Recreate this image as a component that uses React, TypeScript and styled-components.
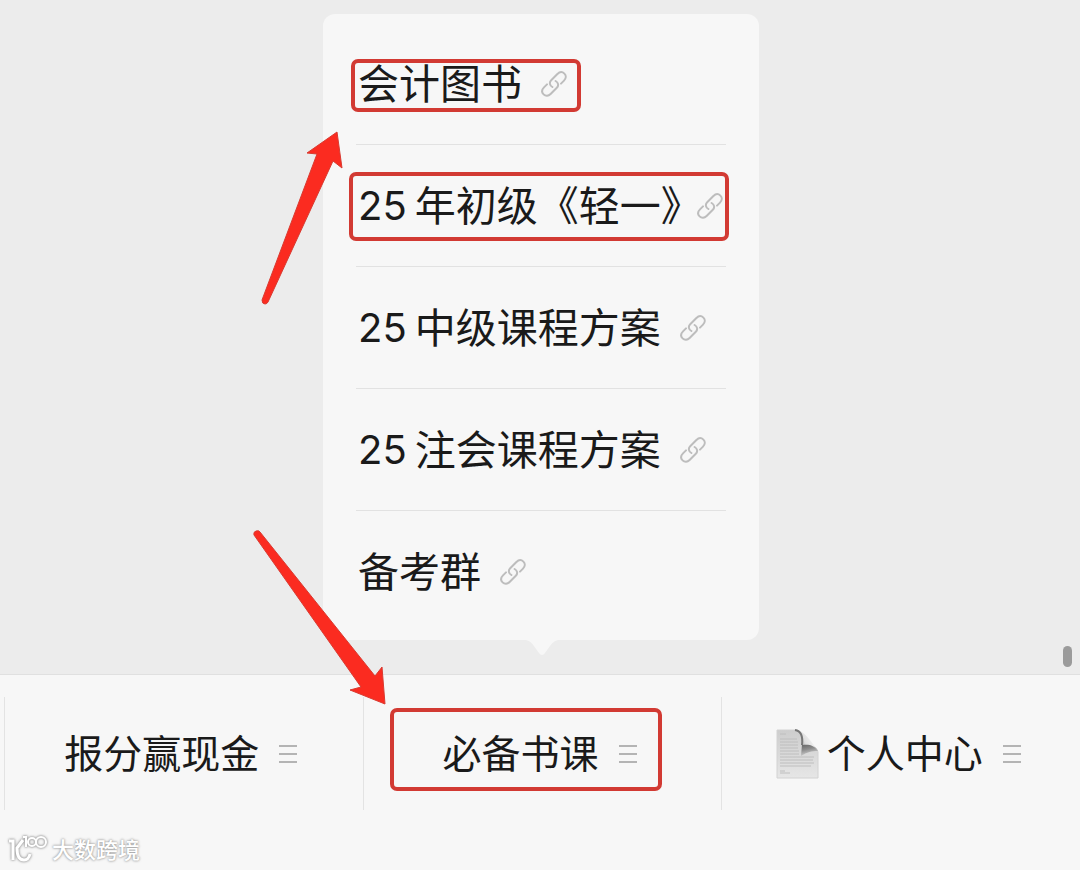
import React from "react";
import styled, { createGlobalStyle } from "styled-components";

const GlobalStyle = createGlobalStyle`
  *, *::before, *::after { box-sizing: border-box; }
  body {
    margin: 0;
    background: #f7f7f7;
    color: #1a1a1a;
    font-family: Inter, "Noto Sans CJK SC", sans-serif;
  }
`;

const Page = styled.div`
  display: flex;
  flex-direction: column;
  min-height: 100vh;
`;

const Stage = styled.main`
  position: relative;
  flex: 1;
  display: flex;
  justify-content: center;
  align-items: flex-start;
  padding: 14px 0 34px 2px;
  background: #ececec;
`;

const Popup = styled.section`
  position: relative;
  z-index: 1;
  width: 436px;
  padding: 9px 33px 7px;
  border-radius: 12px;
  background: #f7f7f7;
`;

const PopupTail = styled.svg`
  position: absolute;
  top: 100%;
  left: 50%;
  width: 32px;
  height: 16px;
  margin-left: -15px;
  fill: #f7f7f7;
`;

const MenuList = styled.ul`
  margin: 0;
  padding: 0;
  list-style: none;
`;

const MenuRow = styled.li`
  display: flex;
  align-items: center;
  height: 122px;
  border-bottom: 1px solid #e2e2e2;
  &:last-child { border-bottom-color: transparent; }
`;

const MenuLink = styled.a`
  position: relative;
  display: flex;
  align-items: center;
  gap: 18px;
  padding-left: 2px;
  color: inherit;
  font-size: 41px;
  line-height: 60px;
  white-space: nowrap;
  text-decoration: none;
`;

const LinkLabel = styled.span<{ $tight?: boolean }>`
  display: flex;
  gap: 8px;
  margin-right: ${(p) => (p.$tight ? "-24px" : "0")};
`;

const Digits = styled.span`
  font-size: 40px;
`;

const Highlight = styled.span<{ $inset: string }>`
  position: absolute;
  inset: ${(p) => p.$inset};
  border: 4px solid #d23a33;
  border-radius: 7px;
  pointer-events: none;
`;

const Arrow = styled.svg<{ $top: number; $left: number }>`
  position: absolute;
  z-index: 2;
  top: ${(p) => p.$top}px;
  left: ${(p) => p.$left}px;
  fill: #fb2b20;
  stroke: #d93a30;
  stroke-width: 1;
  stroke-linejoin: round;
  pointer-events: none;
`;

const ScrollThumb = styled.div`
  position: absolute;
  right: 8px;
  bottom: 7px;
  width: 9px;
  height: 21px;
  border-radius: 5px;
  background: #9b9b9b;
`;

const BottomBar = styled.footer`
  border-top: 1px solid #e0e0e0;
  background: #f7f7f7;
`;

const Tabs = styled.nav`
  display: grid;
  grid-template-columns: repeat(3, 1fr);
  padding: 22px 0 0 4px;
`;

const Tab = styled.div`
  display: flex;
  align-items: center;
  justify-content: center;
  height: 113px;
  padding-right: 6px;
  border-left: 1px solid #e3e3e3;
`;

const TabButton = styled.button`
  position: relative;
  display: flex;
  align-items: center;
  gap: 8px;
  padding: 0;
  border: 0;
  background: none;
  color: inherit;
  font: inherit;
  font-size: 39px;
  line-height: 56px;
  white-space: nowrap;
`;

const MenuBars = styled.svg`
  margin-left: 12px;
  stroke: #b4b4b4;
  stroke-width: 2;
`;

const Watermark = styled.div`
  display: flex;
  align-items: center;
  gap: 4px;
  height: 60px;
  padding: 20px 0 0 8px;
  color: #fff;
  font-size: 22px;
  font-weight: 500;
  line-height: 32px;
  text-shadow: 0 0 2px #999, 0 0 3px #aaa;
  svg { filter: drop-shadow(0 0 1px #999) drop-shadow(0 0 1px #bbb); }
`;

const ChainIcon = () => (
  <svg width="28" height="28" viewBox="0 0 28 28" fill="none" stroke="#bdbdbd" strokeWidth="2" strokeLinecap="round" aria-hidden="true">
    <path d="M12.4 17C9.6 15.4 9 12.4 11.2 10.2L17.4 4C19.6 1.8 22.4 1.6 24.4 3.6C26.4 5.6 26.2 8.4 24 10.6L21 13.6" />
    <path d="M15.6 11C18.4 12.6 19 15.6 16.8 17.8L10.6 24C8.4 26.2 5.6 26.4 3.6 24.4C1.6 22.4 1.8 19.6 4 17.4L7 14.4" />
  </svg>
);

const PageIcon = () => (
  <svg width="43" height="50" viewBox="0 0 43 50" aria-hidden="true">
    <defs>
      <linearGradient id="sheet" x1="0" y1="0" x2="0" y2="1">
        <stop offset="0" stopColor="#cdcdcd" />
        <stop offset="1" stopColor="#e6e6e6" />
      </linearGradient>
      <linearGradient id="curl" x1="0" y1="0.6" x2="0.8" y2="0.2">
        <stop offset="0" stopColor="#8a8a8a" />
        <stop offset="0.45" stopColor="#dedede" />
        <stop offset="1" stopColor="#f7f7f7" />
      </linearGradient>
      <linearGradient id="shade" x1="0" y1="0" x2="0.3" y2="1">
        <stop offset="0" stopColor="#5f5f5f" />
        <stop offset="0.5" stopColor="#8c8c8c" />
        <stop offset="1" stopColor="#d2d2d2" />
      </linearGradient>
    </defs>
    <path d="M1 1H20C25 2 27 8 26 16C34 15 41 18 42 23V49H1Z" fill="url(#sheet)" stroke="#d2d2d2" />
    <path d="M26 15C34 14 40 17 42 22C36 22 31 23 25 27Z" fill="url(#shade)" />
    <path d="M19 1C27 1 32 8 42 22C38 16 33 15 26 16C27 8 25 2 19 1Z" fill="url(#curl)" />
    <path d="M19 1C25 2 27 8 26 16" fill="none" stroke="#777" strokeWidth="2" />
    <path d="M4 5H10M4 10H21M4 13H22M4 16H22M4 19H22M4 22H23M4 25H23M4 28H38M4 31H37M4 34H38M4 37H35M4 42H9M4 44H14" stroke="#bebebe" strokeWidth="1" />
  </svg>
);

const BrandMark = () => (
  <svg width="40" height="30" viewBox="0 0 40 30" fill="none" stroke="#fff" strokeWidth="3" aria-hidden="true">
    <path d="M1 6H5V25" />
    <path d="M15 5L9 13C9 21 11 25 16 25C19 25 21 23 22 19" />
    <path d="M15 2H18V12" strokeWidth="2" />
    <circle cx="24" cy="7" r="4" strokeWidth="2" />
    <circle cx="33" cy="7" r="5" strokeWidth="2" />
  </svg>
);

type Item = { digits?: string; text: string; tight?: boolean; inset?: string };

const items: Item[] = [
  { text: "会计图书", inset: "5px -13px 2px -5px" },
  { digits: "25", text: "年初级《轻一》", tight: true, inset: "-4px -5px -5px -7px" },
  { digits: "25", text: "中级课程方案" },
  { digits: "25", text: "注会课程方案" },
  { text: "备考群" },
];

const tabs = [
  { text: "报分赢现金" },
  { text: "必备书课", inset: "-18px -25px -9px -52px" },
  { text: "个人中心", page: true },
];

export default function App() {
  return (
    <Page>
      <GlobalStyle />
      <Stage>
        <Popup>
          <MenuList>
            {items.map((item) => (
              <MenuRow key={item.text}>
                <MenuLink href="#">
                  <LinkLabel $tight={item.tight}>
                    {item.digits && <Digits>{item.digits}</Digits>}
                    <span>{item.text}</span>
                  </LinkLabel>
                  <ChainIcon />
                  {item.inset && <Highlight $inset={item.inset} />}
                </MenuLink>
              </MenuRow>
            ))}
          </MenuList>
          <PopupTail viewBox="0 0 32 16" aria-hidden="true">
            <path d="M0 0H32C26 1 23 8 19 13Q16 17 13 13C9 8 6 1 0 0Z" />
          </PopupTail>
          <Arrow $top={116} $left={-63} width="86" height="178" viewBox="0 0 86 178" aria-hidden="true">
            <path d="M77 2L47 23L57 24L2 170Q2 174 5 174Q7 174 8 172L73 31L82 38Z" />
          </Arrow>
          <Arrow $top={514} $left={-71} width="136" height="180" viewBox="0 0 136 180" aria-hidden="true">
            <path d="M133 176L98 162L109 159L2 7Q1 4 4 3Q7 2 8 4L123 148L130 139Z" />
          </Arrow>
        </Popup>
        <ScrollThumb />
      </Stage>
      <BottomBar>
        <Tabs>
          {tabs.map((tab) => (
            <Tab key={tab.text}>
              <TabButton type="button">
                {tab.page && <PageIcon />}
                <span>{tab.text}</span>
                <MenuBars width="18" height="18" viewBox="0 0 18 18" aria-hidden="true">
                  <path d="M0 1H18M0 9H18M0 17H18" />
                </MenuBars>
                {tab.inset && <Highlight $inset={tab.inset} />}
              </TabButton>
            </Tab>
          ))}
        </Tabs>
        <Watermark>
          <BrandMark />
          <span>大数跨境</span>
        </Watermark>
      </BottomBar>
    </Page>
  );
}
